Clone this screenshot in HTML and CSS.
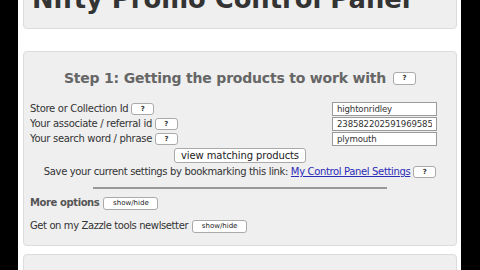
FILE: index.html
```html
<!DOCTYPE html>
<html>
<head>
<meta charset="utf-8">
<link rel="stylesheet" href="styles.css">
</head>
<body>
<div class="page">
  <div class="panel title-panel">
    <h1 class="title">Nifty Promo Control Panel</h1>
  </div>
  <div class="panel step-panel">
    <div class="step-head">
      <h2 class="step-title">Step 1: Getting the products to work with</h2>
      <button class="qbtn qbtn-head">?</button>
    </div>
    <div class="form">
      <div class="labels">
        <div class="lrow">Store or Collection Id <button class="qbtn">?</button></div>
        <div class="lrow">Your associate / referral id <button class="qbtn">?</button></div>
        <div class="lrow">Your search word / phrase <button class="qbtn">?</button></div>
      </div>
      <div class="inputs">
        <input class="field" type="text" value="hightonridley">
        <input class="field" type="text" value="238582202591969585">
        <input class="field" type="text" value="plymouth">
      </div>
    </div>
    <div class="center-row">
      <button class="btn view-btn">view matching products</button>
    </div>
    <div class="save-row">
      Save your current settings by bookmarking this link: <a class="link" href="#">My Control Panel Settings</a> <button class="qbtn">?</button>
    </div>
    <hr class="rule">
    <div class="opt-row">
      <span class="opt-title">More options</span>
      <button class="btn small-btn">show/hide</button>
    </div>
    <div class="opt-row news-row">
      <span>Get on my Zazzle tools newlsetter</span>
      <button class="btn small-btn">show/hide</button>
    </div>
  </div>
  <div class="panel next-panel"></div>
</div>
</body>
</html>
```
FILE: styles.css
```css
html, body {
  margin: 0;
  padding: 0;
  background: #000;
  height: 100%;
  overflow: hidden;
}
.page {
  width: 434px;
  margin: -30px 0 0 18px;
  padding: 0 4px 0 5px;
  background: #fff;
  min-height: 320px;
  font-family: "DejaVu Sans", Verdana, sans-serif;
  color: #333;
}
.panel {
  background: #efefef;
  border: 1px solid #dcdcdc;
  border-radius: 4px;
}
.title-panel {
  height: 59px;
  box-sizing: border-box;
  display: flex;
  align-items: flex-start;
}
.title {
  margin: 0;
  padding: 14px 0 0 8px;
  font-size: 25.8px;
  line-height: 28px;
  font-weight: bold;
  color: #333;
  letter-spacing: 0;
}
.step-panel {
  margin-top: 22px;
  padding: 16px 19px 12px 6px;
}
.step-head {
  display: flex;
  justify-content: center;
  align-items: center;
  gap: 7px;
  padding-left: 13px;
}
.step-title {
  margin: 0;
  font-size: 14px;
  line-height: 20px;
  font-weight: bold;
  color: #666;
  letter-spacing: -0.2px;
}
.qbtn {
  font-family: "DejaVu Sans", sans-serif;
  font-size: 7px;
  font-weight: bold;
  line-height: 9px;
  letter-spacing: 0;
  width: 23px;
  height: 12px;
  padding: 0;
  background: #fff;
  border: 1px solid #aaa;
  border-radius: 3px;
  color: #333;
  vertical-align: middle;
}
.qbtn-head {
  height: 13px;
}
.form {
  display: flex;
  justify-content: space-between;
  margin-top: 12px;
}
.labels {
  display: flex;
  flex-direction: column;
  padding-top: 1px;
}
.lrow {
  height: 15px;
  line-height: 15px;
  font-size: 10px;
  letter-spacing: -0.3px;
  white-space: nowrap;
}
.inputs {
  display: flex;
  flex-direction: column;
  width: 105px;
  margin-top: 2px;
}
.field {
  height: 14px;
  box-sizing: border-box;
  margin: 0 0 1px 0;
  padding: 0 4px;
  border: 1px solid #9a9a9a;
  background: #fff;
  font-family: "DejaVu Sans", sans-serif;
  font-size: 8.6px;
  letter-spacing: -0.15px;
  color: #333;
}
.center-row {
  display: flex;
  justify-content: center;
  padding-left: 13px;
  margin-top: 1px;
}
.btn {
  background: #fff;
  border: 1px solid #aaa;
  border-radius: 3px;
  padding: 0;
  color: #222;
  font-family: "DejaVu Sans", sans-serif;
}
.view-btn {
  width: 132px;
  height: 15px;
  font-size: 10px;
  line-height: 13px;
  letter-spacing: -0.1px;
}
.save-row {
  text-align: center;
  padding-left: 13px;
  margin-top: 1px;
  font-size: 10px;
  line-height: 15px;
  letter-spacing: -0.35px;
  color: #333;
  white-space: nowrap;
}
.link {
  color: #2b2bb8;
}
.rule {
  width: 294px;
  margin: 8px auto 0;
  border: 0;
  border-top: 2px solid #999;
  position: relative;
  left: 6px;
}
.opt-row {
  display: flex;
  align-items: center;
  gap: 4px;
  margin-top: 7px;
  font-size: 10px;
  line-height: 14px;
  letter-spacing: -0.4px;
}
.opt-title {
  font-weight: bold;
  color: #555;
}
.news-row {
  margin-top: 9px;
}
.small-btn {
  width: 55px;
  height: 13px;
  font-size: 7px;
  line-height: 11px;
  letter-spacing: 0;
}
.next-panel {
  margin-top: 8px;
  height: 40px;
}
```
